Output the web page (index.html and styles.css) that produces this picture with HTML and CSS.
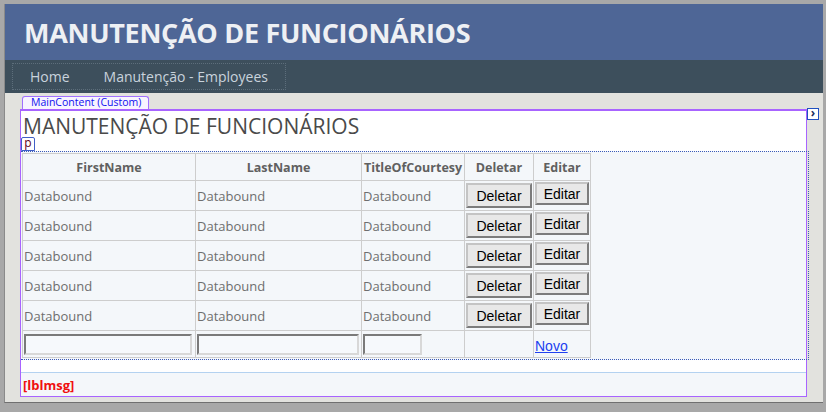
FILE: index.html
```html
<!DOCTYPE html>
<html lang="pt">

<head>
    <meta charset="UTF-8">
    <title>Manutenção de Funcionários</title>
    <link rel="stylesheet" href="styles.css">
</head>

<body>
    <div class="frame">
        <div class="header">
            <h1 class="site-title">MANUTENÇÃO DE FUNCIONÁRIOS</h1>
        </div>
        <div class="nav">
            <div class="menu">
                <a class="menu-item">Home</a>
                <a class="menu-item">Manutenção - Employees</a>
            </div>
        </div>
        <div class="main">
            <div class="tab">MainContent (Custom)</div>
            <span class="arrow">&#8250;</span>
            <div class="content">
                <div class="title-block">
                    <h2 class="page-title">MANUTENÇÃO DE FUNCIONÁRIOS</h2>
                    <span class="ptag">p</span>
                </div>
                <div class="grid-wrap">
                    <table class="grid">
                        <colgroup>
                            <col style="width:173px">
                            <col style="width:166px">
                            <col style="width:103px">
                            <col style="width:69px">
                            <col style="width:57px">
                        </colgroup>
                        <tr class="head">
                            <th>FirstName</th>
                            <th>LastName</th>
                            <th>TitleOfCourtesy</th>
                            <th>Deletar</th>
                            <th>Editar</th>
                        </tr>
                        <tr>
                            <td>Databound</td>
                            <td>Databound</td>
                            <td>Databound</td>
                            <td class="del"><button class="btn btn-del">Deletar</button></td>
                            <td class="edit"><button class="btn btn-edit">Editar</button></td>
                        </tr>
                        <tr>
                            <td>Databound</td>
                            <td>Databound</td>
                            <td>Databound</td>
                            <td class="del"><button class="btn btn-del">Deletar</button></td>
                            <td class="edit"><button class="btn btn-edit">Editar</button></td>
                        </tr>
                        <tr>
                            <td>Databound</td>
                            <td>Databound</td>
                            <td>Databound</td>
                            <td class="del"><button class="btn btn-del">Deletar</button></td>
                            <td class="edit"><button class="btn btn-edit">Editar</button></td>
                        </tr>
                        <tr>
                            <td>Databound</td>
                            <td>Databound</td>
                            <td>Databound</td>
                            <td class="del"><button class="btn btn-del">Deletar</button></td>
                            <td class="edit"><button class="btn btn-edit">Editar</button></td>
                        </tr>
                        <tr>
                            <td>Databound</td>
                            <td>Databound</td>
                            <td>Databound</td>
                            <td class="del"><button class="btn btn-del">Deletar</button></td>
                            <td class="edit"><button class="btn btn-edit">Editar</button></td>
                        </tr>
                        <tr class="foot">
                            <td><input class="field field-first" type="text"></td>
                            <td><input class="field field-last" type="text"></td>
                            <td><input class="field field-title" type="text"></td>
                            <td></td>
                            <td><a class="novo" href="#">Novo</a></td>
                        </tr>
                    </table>
                </div>
                <div class="spacer"></div>
                <div class="msg">[lblmsg]</div>
            </div>
        </div>
    </div>
</body>

</html>
```

FILE: styles.css
```css
body {
    margin: 0;
    background: #a8a8a8;
    font-family: "Open Sans", "Noto Sans", sans-serif;
}

.frame {
    margin: 4px 3px 0 4px;
    height: 399px;
    background: #e2e2de;
    border-bottom: 1px solid #707070;
    border-left: 1px solid #8a8a8a;
    box-sizing: border-box;
}

.header {
    height: 56px;
    background: #4e6696;
    display: flex;
    align-items: center;
    padding-left: 19px;
}

.site-title {
    margin: 0;
    color: #eef0f4;
    font-size: 27px;
    font-weight: 700;
    letter-spacing: -0.3px;
}

.nav {
    height: 33px;
    background: #3d4f5c;
    padding: 3px 0 0 7px;
    box-sizing: border-box;
}

.menu {
    display: inline-flex;
    align-items: center;
    height: 27px;
    border: 1px dotted #5d6e7b;
    box-sizing: border-box;
}

.menu-item {
    color: #c9d3dc;
    font-size: 14px;
    padding: 0 17px;
}

.main {
    position: relative;
    padding: 3px 16px 0 15px;
}

.tab {
    width: fit-content;
    margin-left: 2px;
    height: 12px;
    line-height: 11px;
    padding: 0 7px 0 8px;
    border: 1px solid #a070ff;
    border-bottom: none;
    border-radius: 3px 3px 0 0;
    font-size: 10.5px;
    color: #1010f0;
    background: #f8f4ff;
}

.arrow {
    position: absolute;
    left: 802px;
    top: 15px;
    width: 10px;
    height: 10px;
    border: 1px solid #2050c0;
    background: #fff;
    font-size: 12px;
    line-height: 8px;
    text-align: center;
    color: #203060;
    font-weight: 700;
}

.content {
    border: 1px solid #a864ff;
    border-width: 2px 1px 1px 1px;
    background: #f4f7fa;
}

.title-block {
    position: relative;
    height: 40px;
    background: #fff;
}

.page-title {
    margin: 0;
    padding: 1px 0 0 2px;
    font-size: 21px;
    font-weight: 400;
    color: #4a4a4a;
    line-height: 28px;
}

.ptag {
    position: absolute;
    left: 0;
    bottom: 0;
    width: 12px;
    height: 12px;
    border: 1px solid #4060c8;
    border-radius: 2px 2px 0 0;
    background: #fff;
    font-size: 12px;
    line-height: 9px;
    text-align: center;
    color: #600020;
    box-sizing: content-box;
}

.grid-wrap {
    border-top: 1px dotted #3a5ab8;
    border-bottom: 1px dotted #3a5ab8;
    border-right: 1px dotted #3a5ab8;
    margin-right: -3px;
    padding: 1px 0 1px 1px;
    height: 209px;
    box-sizing: border-box;
}

.grid {
    border-collapse: collapse;
    table-layout: fixed;
    width: 568px;
    border-right: 1px solid #000;
}

.grid th,
.grid td {
    border: 1px solid #cdcdcd;
    padding: 0 1px;
    font-size: 13px;
    white-space: nowrap;
    overflow: hidden;
}

.grid th {
    height: 26px;
    color: #606060;
    font-weight: 700;
    font-size: 12.5px;
}

.grid td {
    height: 30px;
    box-sizing: border-box;
    color: #6e6e6e;
    text-align: left;
}

.grid td.del {
    padding: 2px 1px 0 1px;
    vertical-align: top;
}

.grid td.edit {
    padding: 1px 1px 0 1px;
    vertical-align: top;
}

.btn {
    font-family: "Liberation Sans", Arial, sans-serif;
    font-size: 14px;
    color: #000;
    background: #e8e8e8;
    border: 2px solid;
    border-color: #c4c4c4 #7c7c7c #7c7c7c #c4c4c4;
    padding: 0;
    display: block;
}

.btn-del {
    width: 66px;
    height: 25px;
}

.btn-edit {
    width: 54px;
    height: 23px;
}

.grid tr.foot td {
    height: 27px;
    padding: 0 1px;
    vertical-align: middle;
}

.field {
    display: block;
    height: 21px;
    box-sizing: border-box;
    border: 2px solid;
    border-color: #7a7a7a #d8d8d8 #d8d8d8 #7a7a7a;
    background: #f6f9fc;
    padding: 0;
}

.field-first {
    width: 168px;
}

.field-last {
    width: 162px;
}

.field-title {
    width: 59px;
}

.novo {
    font-family: "Liberation Sans", Arial, sans-serif;
    font-size: 14px;
    color: #2040f0;
    display: inline-block;
    margin-top: 4px;
}

.spacer {
    height: 12px;
    background: #fff;
    border-bottom: 1px solid #b4d2f0;
}

.msg {
    height: 23px;
    padding: 3px 0 0 2px;
    box-sizing: border-box;
    color: #f01010;
    font-weight: 700;
    font-size: 13px;
}
```
